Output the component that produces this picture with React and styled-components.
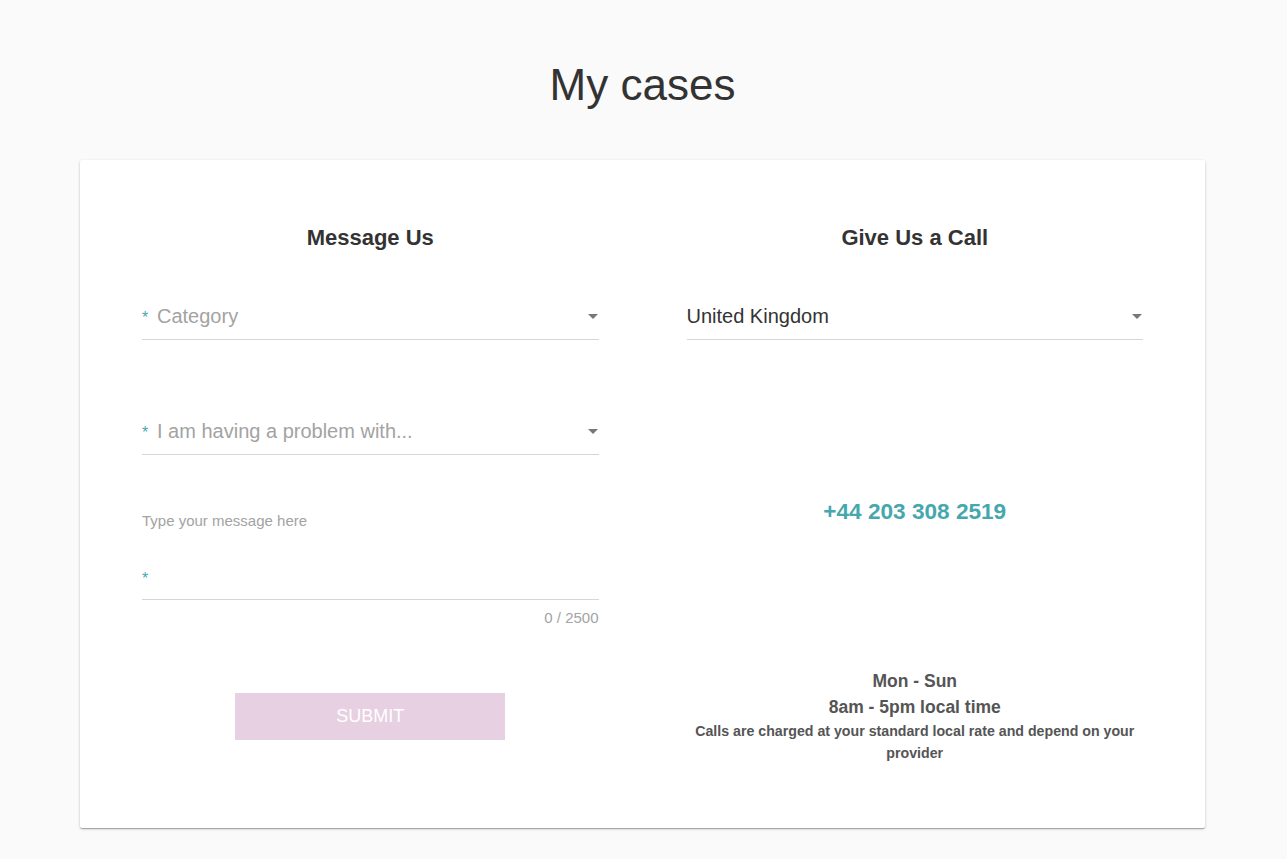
import styled, { createGlobalStyle } from "styled-components";

const GlobalStyle = createGlobalStyle`
  body {
    margin: 0;
    background: #fafafa;
    font-family: "Liberation Sans", Arial, sans-serif;
    color: #333;
  }
`;

const Page = styled.div`
  display: flex;
  flex-direction: column;
  align-items: center;
  padding: 60px 2px 31px 0;
`;

const PageTitle = styled.h1`
  margin: 0 0 50px;
  font-size: 44px;
  line-height: 50px;
  font-weight: 400;
  color: #333;
`;

const Card = styled.div`
  width: 1125px;
  box-sizing: border-box;
  background: #fff;
  border-radius: 2px;
  padding: 65px 62px 64px;
  display: grid;
  grid-template-columns: 1fr 1fr;
  column-gap: 88px;
  box-shadow: 0 1px 3px rgba(0, 0, 0, 0.2), 0 1px 1px rgba(0, 0, 0, 0.14),
    0 2px 1px -1px rgba(0, 0, 0, 0.12);
`;

const Column = styled.div`
  display: flex;
  flex-direction: column;
`;

const Heading = styled.h2`
  margin: 0 0 42px;
  text-align: center;
  font-size: 22px;
  line-height: 26px;
  font-weight: 700;
  color: #333;
`;

const Field = styled.div`
  display: flex;
  align-items: center;
  height: 46px;
  border-bottom: 1px solid #d6d6d6;
  margin-top: ${(p) => p.$gap || 0}px;
`;

const Star = styled.span`
  color: #4aa8ae;
  font-size: 16px;
  line-height: 16px;
  width: 15px;
  flex-shrink: 0;
  position: relative;
  top: 2px;
`;

const Value = styled.span`
  flex: 1;
  font-size: 20px;
  line-height: 24px;
  color: ${(p) => (p.$placeholder ? "#a3a3a3" : "#333")};
`;

const Caret = styled.span`
  width: 0;
  height: 0;
  border-left: 5px solid transparent;
  border-right: 5px solid transparent;
  border-top: 5px solid #777;
  margin-right: 1px;
`;

const HelperLabel = styled.div`
  margin-top: 57px;
  font-size: 15px;
  line-height: 18px;
  color: #a3a3a3;
`;

const MessageBox = styled.div`
  display: flex;
  align-items: center;
  height: 44px;
  margin-top: 25px;
  border-bottom: 1px solid #d6d6d6;
`;

const Counter = styled.div`
  margin-top: 9px;
  text-align: right;
  font-size: 15px;
  line-height: 18px;
  color: #a3a3a3;
`;

const SubmitButton = styled.button`
  align-self: center;
  margin-top: 66px;
  width: 270px;
  height: 47px;
  border: none;
  border-radius: 0;
  background: #e7d0e2;
  color: #fff;
  font-family: "Liberation Sans", Arial, sans-serif;
  font-size: 18px;
  text-transform: uppercase;
  cursor: default;
`;

const Phone = styled.div`
  margin-top: 159px;
  text-align: center;
  font-size: 22.6px;
  line-height: 26px;
  font-weight: 700;
  color: #46a7ad;
`;

const Hours = styled.div`
  margin-top: ${(p) => p.$gap || 0}px;
  text-align: center;
  font-size: 17.5px;
  line-height: 26px;
  font-weight: 700;
  color: #555;
`;

const Note = styled.div`
  text-align: center;
  font-size: 14.2px;
  line-height: 22px;
  font-weight: 700;
  color: #555;
`;

const Select = ({ label, required, placeholder, gap }) => (
  <Field $gap={gap}>
    {required && <Star>*</Star>}
    <Value $placeholder={placeholder}>{label}</Value>
    <Caret />
  </Field>
);

export default function App() {
  return (
    <>
      <GlobalStyle />
      <Page>
        <PageTitle>My cases</PageTitle>
        <Card>
          <Column>
            <Heading>Message Us</Heading>
            <Select label="Category" required placeholder />
            <Select label="I am having a problem with..." required placeholder gap={68} />
            <HelperLabel>Type your message here</HelperLabel>
            <MessageBox>
              <Star>*</Star>
            </MessageBox>
            <Counter>0 / 2500</Counter>
            <SubmitButton>Submit</SubmitButton>
          </Column>
          <Column>
            <Heading>Give Us a Call</Heading>
            <Select label="United Kingdom" />
            <Phone>+44 203 308 2519</Phone>
            <Hours $gap={143}>Mon - Sun</Hours>
            <Hours>8am - 5pm local time</Hours>
            <Note>
              Calls are charged at your standard local rate and depend on your
              provider
            </Note>
          </Column>
        </Card>
      </Page>
    </>
  );
}
